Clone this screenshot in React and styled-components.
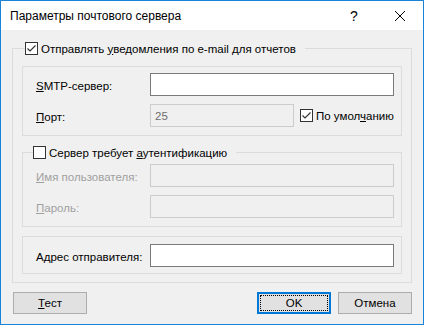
import React from "react";
import styled, { createGlobalStyle } from "styled-components";

const GlobalStyle = createGlobalStyle`
  html, body {
    margin: 0;
    padding: 0;
    background: #ffffff;
  }
  body {
    font-family: "Liberation Sans", Arial, sans-serif;
    font-size: 12px;
    color: #000;
  }
`;

const Window = styled.div`
  width: 424px;
  height: 325px;
  box-sizing: border-box;
  border: 1px solid #1883d7;
  display: flex;
  flex-direction: column;
  background: #f0f0f0;
`;

const TitleBar = styled.div`
  height: 29px;
  flex: none;
  display: flex;
  align-items: center;
  background: #ffffff;
`;

const Title = styled.div`
  flex: 1;
  padding-left: 9px;
`;

const CaptionButton = styled.div`
  width: 46px;
  height: 29px;
  display: flex;
  align-items: center;
  justify-content: center;
  font-size: 14px;
`;

const Body = styled.div`
  flex: 1;
  padding: 12px 11px 10px;
  display: flex;
  flex-direction: column;
  font-size: 11.5px;
`;

const Fieldset = styled.fieldset`
  margin: ${(p) => p.$mt || 0}px 0 0;
  min-width: 0;
  border: 1px solid #dcdcdc;
  padding: ${(p) => p.$pad};
`;

const Legend = styled.legend`
  height: 13px;
  padding: 0 9px 0 0;
  margin-left: ${(p) => p.$ml || 0}px;
  display: flex;
  align-items: center;
`;

const Box = styled.div`
  border: 1px solid #dcdcdc;
  padding: ${(p) => p.$pad};
  margin-top: ${(p) => p.$mt || 0}px;
`;

const FieldGrid = styled.div`
  display: grid;
  grid-template-columns: 114px 1fr;
  row-gap: 8px;
  align-items: center;
  margin-left: ${(p) => p.$ml || 0}px;
`;

const FieldLabel = styled.label`
  padding-top: 2px;
  color: ${(p) => (p.$disabled ? "#a0a0a0" : "#000")};
  white-space: nowrap;
`;

const Input = styled.input`
  display: block;
  box-sizing: border-box;
  width: ${(p) => p.$w || "100%"};
  height: 23px;
  margin: 0;
  padding: 0 4px;
  font: inherit;
  border: 1px solid #7a7a7a;
  background: #ffffff;
  color: #000;
  outline: none;

  &:disabled {
    border-color: #cccccc;
    background: #f0f0f0;
    color: #6d6d6d;
  }
`;

const PortRow = styled.div`
  display: flex;
  align-items: center;
  gap: 6px;
`;

const CheckLabel = styled.span`
  display: inline-flex;
  align-items: center;
  gap: 3px;
  white-space: nowrap;
`;

const Box13 = styled.span`
  width: 13px;
  height: 13px;
  box-sizing: border-box;
  border: 1px solid #333333;
  background: #ffffff;
  display: inline-flex;
  flex: none;
`;

const Key = styled.u`
  text-decoration: underline;
  text-underline-offset: 1px;
`;

const Footer = styled.div`
  display: flex;
  align-items: center;
  gap: 7px;
  margin-top: 9px;
  padding-left: 1px;
`;

const Spacer = styled.div`
  flex: 1;
`;

const Button = styled.button`
  width: 74px;
  height: 22px;
  box-sizing: border-box;
  padding: 0;
  margin: 0;
  font: inherit;
  color: #000;
  background: #e1e1e1;
  border: ${(p) => (p.$focused ? "2px solid #0078d7" : "1px solid #adadad")};
  outline: ${(p) => (p.$focused ? "1px dotted #000" : "none")};
  outline-offset: -4px;
`;

const Checkbox = ({ checked }) => (
  <Box13>
    {checked && (
      <svg width="11" height="11" viewBox="0 0 11 11">
        <path d="M1.5 5.5 L4 8 L9.5 2.5" fill="none" stroke="#333" strokeWidth="1.2" />
      </svg>
    )}
  </Box13>
);

export default function App() {
  return (
    <>
      <GlobalStyle />
      <Window>
        <TitleBar>
          <Title>Параметры почтового сервера</Title>
          <CaptionButton>?</CaptionButton>
          <CaptionButton>
            <svg width="10" height="10" viewBox="0 0 10 10">
              <path d="M0 0 L10 10 M10 0 L0 10" stroke="#000" strokeWidth="1" />
            </svg>
          </CaptionButton>
        </TitleBar>
        <Body>
          <Fieldset $pad="11px 9px 8px">
            <Legend $ml={3}>
              <CheckLabel>
                <Checkbox checked />
                <span>
                  Отправлять <Key>у</Key>ведомления по e-mail для отчетов
                </span>
              </CheckLabel>
            </Legend>

            <Box $pad="6px 7px 8px 13px">
              <FieldGrid>
                <FieldLabel>
                  <Key>S</Key>MTP-сервер:
                </FieldLabel>
                <Input defaultValue="" />
                <FieldLabel>
                  <Key>П</Key>орт:
                </FieldLabel>
                <PortRow>
                  <Input $w="144px" value="25" disabled readOnly />
                  <CheckLabel>
                    <Checkbox checked />
                    <span>
                      По умол<Key>ч</Key>анию
                    </span>
                  </CheckLabel>
                </PortRow>
              </FieldGrid>
            </Box>

            <Fieldset $mt={10} $pad="5px 7px 8px 10px">
              <Legend>
                <CheckLabel>
                  <Checkbox />
                  <span>
                    Сервер требует <Key>а</Key>утентификацию
                  </span>
                </CheckLabel>
              </Legend>
              <FieldGrid $ml={3}>
                <FieldLabel $disabled>
                  <Key>И</Key>мя пользователя:
                </FieldLabel>
                <Input disabled />
                <FieldLabel $disabled>
                  <Key>П</Key>ароль:
                </FieldLabel>
                <Input disabled type="password" />
              </FieldGrid>
            </Fieldset>

            <Box $mt={9} $pad="7px 7px 6px 13px">
              <FieldGrid>
                <FieldLabel>
                  А<Key>д</Key>рес отправителя:
                </FieldLabel>
                <Input defaultValue="" />
              </FieldGrid>
            </Box>
          </Fieldset>

          <Footer>
            <Button>
              <Key>Т</Key>ест
            </Button>
            <Spacer />
            <Button $focused>OK</Button>
            <Button>Отмена</Button>
          </Footer>
        </Body>
      </Window>
    </>
  );
}
